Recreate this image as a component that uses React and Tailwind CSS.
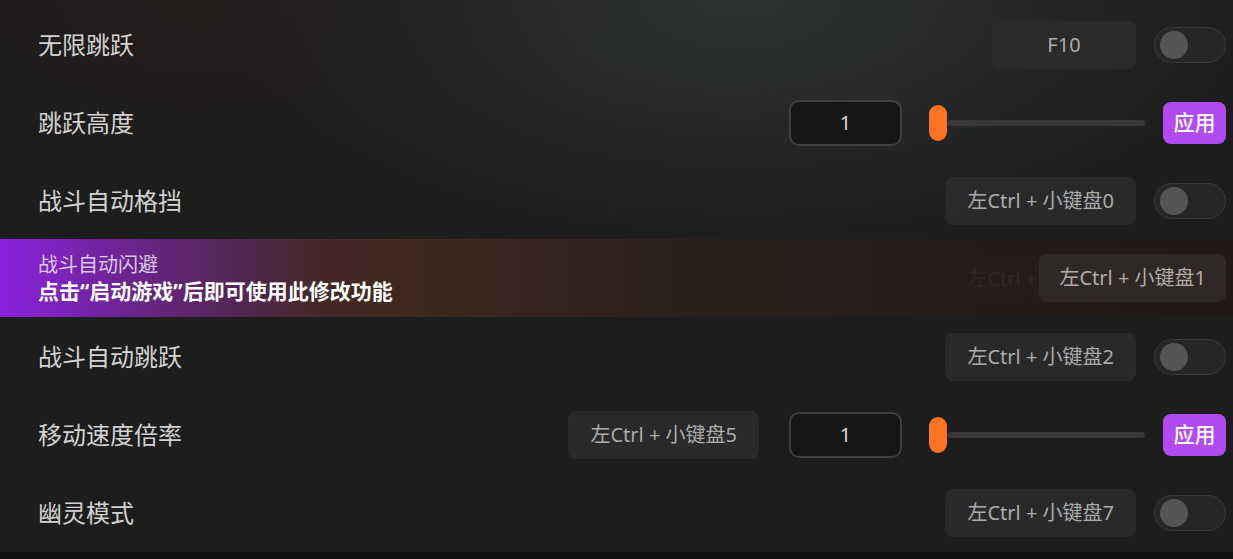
import React from 'react';

const font = { fontFamily: '"Noto Sans", "Noto Sans CJK SC", sans-serif' };

const KeyChip = ({ children }) => (
  <div className="h-[48px] min-w-[144px] px-[22px] rounded-lg bg-[#2b2b2b]/90 flex items-center justify-center text-[20px] text-[#ababab]">
    {children}
  </div>
);

const Toggle = () => (
  <div className="w-[72px] h-[36px] rounded-full border border-[#3a3a3a] bg-[#262626] flex items-center px-[5px]">
    <div className="w-[28px] h-[28px] rounded-full bg-[#555555]" />
  </div>
);

const NumberBox = () => (
  <div className="w-[113px] h-[46px] rounded-[10px] border-2 border-[#3f3f3f] bg-[#161616] flex items-center justify-center text-[20px] text-[#d8d8d8]">
    1
  </div>
);

const Slider = () => (
  <div className="w-[216px] h-[36px] flex items-center">
    <div className="w-[18px] h-[36px] rounded-full bg-[#ff7322] shrink-0" />
    <div className="flex-1 h-[6px] rounded-full bg-[#383838]" />
  </div>
);

const ApplyBtn = () => (
  <button className="w-[63px] h-[42px] rounded-lg bg-[#b24af2] text-white text-[21px] font-medium">
    应用
  </button>
);

const Row = ({ label, children }) => (
  <div className="h-[78px] flex items-center justify-between pl-[38px] pr-[7px]">
    <span className="text-[24px] text-[#d2d2d2]">{label}</span>
    <div className="flex items-center">{children}</div>
  </div>
);

export default function App() {
  return (
    <div
      className="w-[1233px] h-[559px] overflow-hidden bg-[#1d1d1d] relative flex flex-col"
      style={font}
    >
      <div className="absolute inset-x-0 top-0 h-[240px] bg-[radial-gradient(ellipse_520px_240px_at_740px_0px,rgba(60,68,70,0.55),transparent)]" />
      <div className="absolute left-0 top-0 w-[700px] h-[240px] bg-[radial-gradient(ellipse_420px_220px_at_200px_0px,rgba(40,28,22,0.35),transparent)]" />

      <div className="relative pt-[6px] flex-1">
        <Row label="无限跳跃">
          <KeyChip>F10</KeyChip>
          <div className="w-[18px]" />
          <Toggle />
        </Row>
        <Row label="跳跃高度">
          <NumberBox />
          <div className="w-[27px]" />
          <Slider />
          <div className="w-[18px]" />
          <ApplyBtn />
        </Row>
        <Row label="战斗自动格挡">
          <KeyChip>左Ctrl + 小键盘0</KeyChip>
          <div className="w-[18px]" />
          <Toggle />
        </Row>
        <div className="relative">
          <Row label="">
            <KeyChip>左Ctrl + 小键盘1</KeyChip>
            <div className="w-[18px]" />
            <Toggle />
          </Row>
          <div className="absolute inset-x-0 top-[-1px] bottom-[1px] flex items-center justify-between pl-[38px] pr-[7px] bg-[linear-gradient(to_right,rgba(142,34,230,0.97)_0%,rgba(100,38,120,0.95)_14%,rgba(70,40,40,0.94)_26%,rgba(66,42,30,0.93)_32%,rgba(42,30,26,0.92)_60%,rgba(32,24,22,0.92)_100%)]">
            <div className="flex flex-col leading-[27px]">
              <span className="text-[20px] text-[#dcc6ea]">战斗自动闪避</span>
              <span className="text-[21px] font-bold text-white">
                点击<span style={{ fontFamily: '"Noto Sans", sans-serif' }}>“</span>启动游戏<span style={{ fontFamily: '"Noto Sans", sans-serif' }}>”</span>后即可使用此修改功能
              </span>
            </div>
            <div className="h-[48px] px-[20px] rounded-lg bg-[#2e2826] flex items-center text-[20px] text-[#b0aba8]">
              左Ctrl + 小键盘1
            </div>
          </div>
        </div>
        <Row label="战斗自动跳跃">
          <KeyChip>左Ctrl + 小键盘2</KeyChip>
          <div className="w-[18px]" />
          <Toggle />
        </Row>
        <Row label="移动速度倍率">
          <KeyChip>左Ctrl + 小键盘5</KeyChip>
          <div className="w-[30px]" />
          <NumberBox />
          <div className="w-[27px]" />
          <Slider />
          <div className="w-[18px]" />
          <ApplyBtn />
        </Row>
        <Row label="幽灵模式">
          <KeyChip>左Ctrl + 小键盘7</KeyChip>
          <div className="w-[18px]" />
          <Toggle />
        </Row>
      </div>
      <div className="relative h-[8px] bg-[#111111]" />
    </div>
  );
}
